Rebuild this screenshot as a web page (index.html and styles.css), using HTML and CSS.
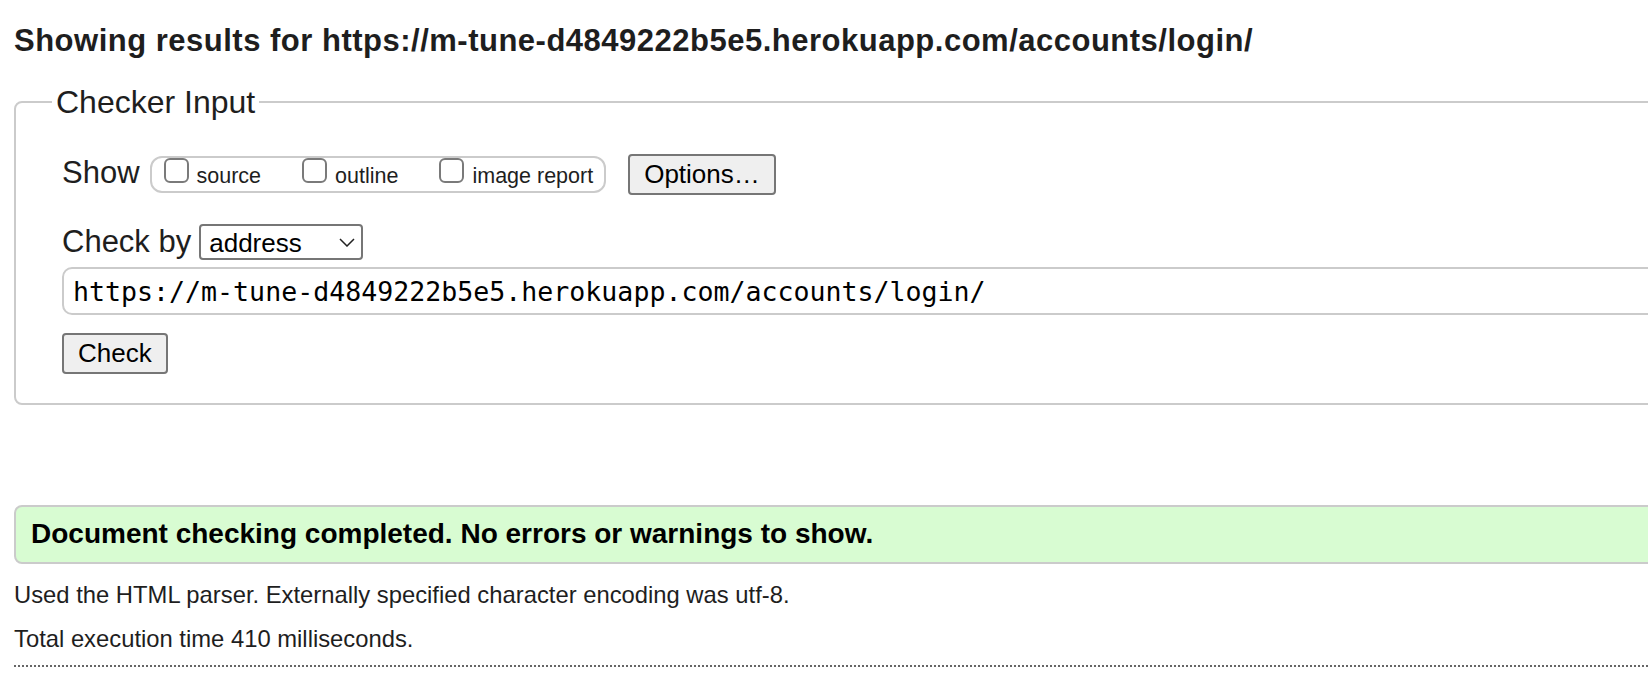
FILE: index.html
```html
<!DOCTYPE html>
<html lang="en">
<head>
<meta charset="utf-8">
<title>Nu Html Checker</title>
<link rel="stylesheet" href="styles.css">
</head>
<body>
<div class="page">
  <h2 class="title">Showing results for https://m-tune-d4849222b5e5.herokuapp.com/accounts/login/</h2>
  <form class="checker-form">
    <fieldset class="checker">
      <legend class="legend">Checker Input</legend>
      <div class="row row-show">
        <span class="label">Show</span>
        <div class="group">
          <label class="opt"><input class="cb" type="checkbox"><span class="opt-text">source</span></label>
          <label class="opt"><input class="cb" type="checkbox"><span class="opt-text">outline</span></label>
          <label class="opt"><input class="cb" type="checkbox"><span class="opt-text">image report</span></label>
        </div>
        <button type="button" class="btn btn-options">Options…</button>
      </div>
      <div class="row row-by">
        <label class="label" for="docselect">Check by</label>
        <div class="select-wrap">
          <select id="docselect" class="select"><option>address</option></select>
          <svg class="chev" width="16" height="9" viewBox="0 0 16 9"><polyline points="1,1 8,8 15,1" fill="none" stroke="#222" stroke-width="1.5"/></svg>
        </div>
      </div>
      <input class="url" type="text" value="https://m-tune-d4849222b5e5.herokuapp.com/accounts/login/">
      <div class="submit-row"><button type="button" class="btn">Check</button></div>
    </fieldset>
  </form>
  <p class="success">Document checking completed. No errors or warnings to show.</p>
  <p class="note">Used the HTML parser. Externally specified character encoding was utf-8.</p>
  <p class="note">Total execution time 410 milliseconds.</p>
  <hr class="dotted">
</div>
</body>
</html>
```
FILE: styles.css
```css
html, body {
  margin: 0;
  padding: 0;
  overflow: hidden;
  background: #fff;
}
body {
  font-family: "Liberation Sans", Arial, Helvetica, sans-serif;
  color: #1e1e1e;
}
.page {
  width: 1800px;
  padding-left: 14px;
  box-sizing: border-box;
}
.title {
  margin: 23px 0 0;
  font-size: 31px;
  line-height: 36px;
  font-weight: bold;
  letter-spacing: 0.5px;
  color: #1e1e1e;
}
.checker-form {
  margin: 25px 0 0;
}
.checker {
  margin: 0;
  border: 2px solid #cbcbcb;
  border-radius: 8px;
  padding: 34px 0 29px 46px;
  min-width: 0;
}
.legend {
  font-size: 32px;
  line-height: 36px;
  padding: 0 4px;
  margin-left: -10px;
  color: #1e1e1e;
}
.row {
  display: flex;
  align-items: baseline;
}
.row-by {
  margin-top: 29px;
}
.label {
  font-size: 31px;
  line-height: 36px;
  color: #1e1e1e;
}
.group {
  display: flex;
  align-items: baseline;
  height: 37px;
  box-sizing: border-box;
  border: 2px solid #cbcbcb;
  border-radius: 12px;
  padding: 0 11px 0 12px;
  margin-left: 10px;
  gap: 41px;
}
.opt {
  display: flex;
  align-items: baseline;
  gap: 8px;
}
.cb {
  appearance: none;
  -webkit-appearance: none;
  width: 25px;
  height: 25px;
  margin: 0;
  box-sizing: border-box;
  border: 2px solid #7a7a7a;
  border-radius: 6px;
  background: #fff;
}
.opt-text {
  font-size: 21.5px;
  line-height: 25px;
  color: #1e1e1e;
}
.btn {
  font-family: "Liberation Sans", Arial, Helvetica, sans-serif;
  font-size: 26px;
  line-height: 30px;
  height: 41px;
  box-sizing: border-box;
  padding: 3px 14px 4px;
  border: 2px solid #767676;
  border-radius: 4px;
  background: #efefef;
  color: #000;
}
.btn-options {
  margin-left: 22px;
}
.select-wrap {
  position: relative;
  display: inline-block;
  margin-left: 8px;
}
.select {
  appearance: none;
  -webkit-appearance: none;
  display: block;
  width: 164px;
  height: 36px;
  box-sizing: border-box;
  padding: 2px 30px 0 8px;
  border: 2px solid #767676;
  border-radius: 4px;
  background: #fff;
  font-family: "Liberation Sans", Arial, Helvetica, sans-serif;
  font-size: 26px;
  line-height: 30px;
  color: #000;
}
.chev {
  position: absolute;
  right: 8px;
  top: 14px;
  pointer-events: none;
}
.url {
  display: block;
  width: 100%;
  height: 48px;
  box-sizing: border-box;
  margin: 7px 0 0;
  padding: 0 9px;
  border: 2px solid #cbcbcb;
  border-radius: 10px;
  font-family: "DejaVu Sans Mono", "Liberation Mono", monospace;
  font-size: 26.6px;
  color: #000;
  background: #fff;
}
.submit-row {
  margin-top: 18px;
}
.success {
  margin: 100px 0 0;
  border: 2px solid #cbcbcb;
  border-radius: 8px;
  background: #d8fcd2;
  padding: 11px 15px 12px;
  font-size: 28px;
  line-height: 32px;
  font-weight: bold;
  color: #000;
}
.note {
  margin: 17px 0 0;
  font-size: 23.8px;
  line-height: 27px;
  color: #1e1e1e;
}
.dotted {
  margin: 13px 0 0;
  height: 0;
  border: 0;
  border-top: 2px dotted #666;
}
```
